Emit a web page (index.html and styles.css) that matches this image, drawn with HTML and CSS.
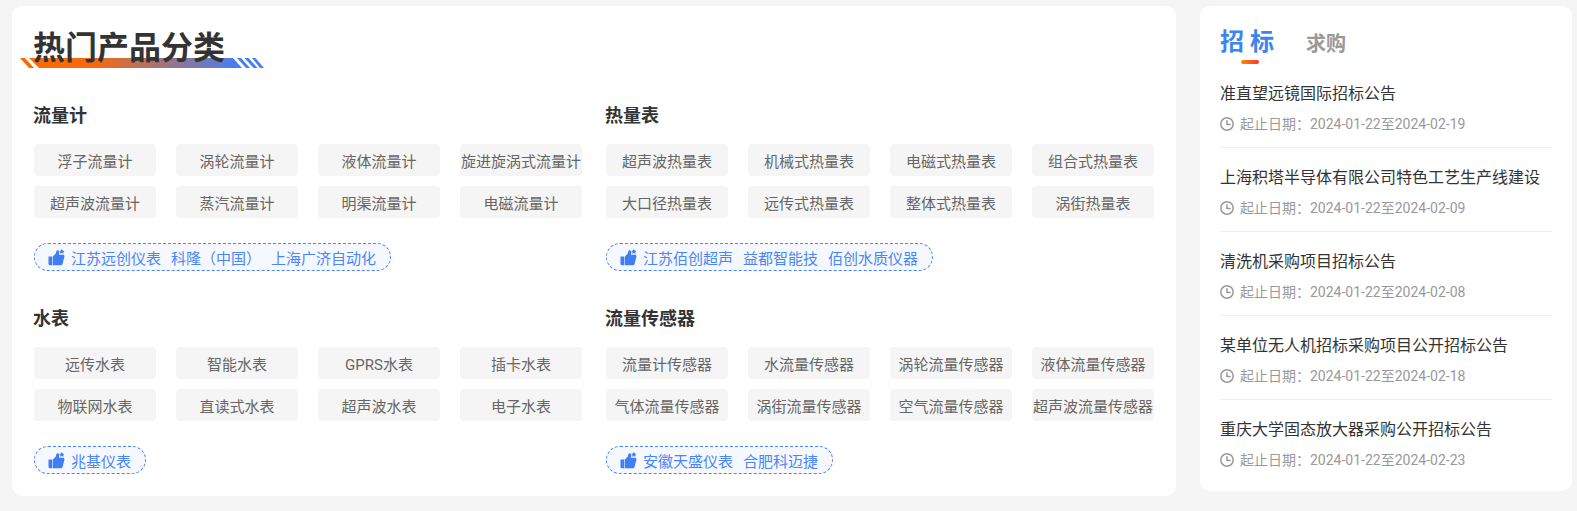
FILE: index.html
```html
<!DOCTYPE html>
<html lang="zh-CN">
<head>
<meta charset="utf-8">
<title>热门产品分类</title>
<link rel="stylesheet" href="styles.css">
</head>
<body>
<svg class="defs" width="0" height="0" aria-hidden="true">
  <symbol id="thumb" viewBox="0 0 17 17">
    <path d="M0.5 7.500h3.800v8.700H1.600a1.100 1.100 0 0 1-1.100-1.100z"/>
    <path d="M4.900 7.400l2.900-3c.4-1.300.7-3 1.700-3.100 1.400-.1 1.900 1.100 1.800 2.400l-.4 2.100h4.200c1 0 1.500.9 1.300 1.900l-1.700 6.700c-.2.800-.8 1.800-1.700 1.800H4.900z"/>
    <path d="M13.800 0l.9 1.500 1.700.4-1.100 1.200.2 1.700-1.700-.7-1.600.7.200-1.700-1.100-1.200 1.600-.4z"/>
  </symbol>
  <symbol id="clock" viewBox="0 0 14 14">
    <circle cx="7" cy="7" r="6.200" fill="none" stroke="currentColor" stroke-width="1.500"/>
    <path d="M7 3.200V7.500H10.600" fill="none" stroke="currentColor" stroke-width="1.500"/>
  </symbol>
</svg>
<main class="page">
  <section class="card products">
    <header class="heading">
      <svg class="ribbon" width="244" height="10" viewBox="0 0 244 10" aria-hidden="true">
        <defs>
          <linearGradient id="rib" x1="0" x2="1" y1="0" y2="0">
            <stop offset="0" stop-color="#ff6a00"/>
            <stop offset=".3" stop-color="#f8690f"/>
            <stop offset="1" stop-color="#4080f8"/>
          </linearGradient>
        </defs>
        <path d="M0 0h5l9 10H9z" fill="#ff6a00"/>
        <path d="M9 0h204l9 10H19z" fill="url(#rib)"/>
        <path d="M217 0h4l9 10h-4z" fill="#4a80f0"/>
        <path d="M224.500 0h4l9 10h-4z" fill="#4a80f0"/>
        <path d="M232 0h3.500l8.500 10h-4z" fill="#4a80f0"/>
      </svg>
      <h1 class="heading-text">热门产品分类</h1>
    </header>
    <div class="grid">
      <article class="group">
        <h2>流量计</h2>
        <div class="tiles">
          <a>浮子流量计</a><a>涡轮流量计</a><a>液体流量计</a><a>旋进旋涡式流量计</a>
          <a>超声波流量计</a><a>蒸汽流量计</a><a>明渠流量计</a><a>电磁流量计</a>
        </div>
        <div class="pill"><svg class="thumb"><use href="#thumb"/></svg><span>江苏远创仪表</span><span>科隆（中国）</span><span>上海广济自动化</span></div>
      </article>
      <article class="group">
        <h2>热量表</h2>
        <div class="tiles">
          <a>超声波热量表</a><a>机械式热量表</a><a>电磁式热量表</a><a>组合式热量表</a>
          <a>大口径热量表</a><a>远传式热量表</a><a>整体式热量表</a><a>涡街热量表</a>
        </div>
        <div class="pill"><svg class="thumb"><use href="#thumb"/></svg><span>江苏佰创超声</span><span>益都智能技</span><span>佰创水质仪器</span></div>
      </article>
      <article class="group">
        <h2>水表</h2>
        <div class="tiles">
          <a>远传水表</a><a>智能水表</a><a>GPRS水表</a><a>插卡水表</a>
          <a>物联网水表</a><a>直读式水表</a><a>超声波水表</a><a>电子水表</a>
        </div>
        <div class="pill"><svg class="thumb"><use href="#thumb"/></svg><span>兆基仪表</span></div>
      </article>
      <article class="group">
        <h2>流量传感器</h2>
        <div class="tiles">
          <a>流量计传感器</a><a>水流量传感器</a><a>涡轮流量传感器</a><a>液体流量传感器</a>
          <a>气体流量传感器</a><a>涡街流量传感器</a><a>空气流量传感器</a><a>超声波流量传感器</a>
        </div>
        <div class="pill"><svg class="thumb"><use href="#thumb"/></svg><span>安徽天盛仪表</span><span>合肥科迈捷</span></div>
      </article>
    </div>
  </section>
  <aside class="card tenders">
    <nav class="tabs">
      <span class="tab active">招标</span>
      <span class="tab">求购</span>
    </nav>
    <ul class="list">
      <li><p class="name">准直望远镜国际招标公告</p><p class="meta"><svg class="clock"><use href="#clock"/></svg>起止日期：2024-01-22至2024-02-19</p></li>
      <li><p class="name">上海积塔半导体有限公司特色工艺生产线建设</p><p class="meta"><svg class="clock"><use href="#clock"/></svg>起止日期：2024-01-22至2024-02-09</p></li>
      <li><p class="name">清洗机采购项目招标公告</p><p class="meta"><svg class="clock"><use href="#clock"/></svg>起止日期：2024-01-22至2024-02-08</p></li>
      <li><p class="name">某单位无人机招标采购项目公开招标公告</p><p class="meta"><svg class="clock"><use href="#clock"/></svg>起止日期：2024-01-22至2024-02-18</p></li>
      <li><p class="name">重庆大学固态放大器采购公开招标公告</p><p class="meta"><svg class="clock"><use href="#clock"/></svg>起止日期：2024-01-22至2024-02-23</p></li>
    </ul>
  </aside>
</main>
</body>
</html>
```

FILE: styles.css
```css
* { box-sizing: border-box; }
html, body { margin: 0; padding: 0; }
body {
  background: #f5f5f5;
  font-family: Roboto, "Noto Sans CJK SC", sans-serif;
  color: #333;
  height: 511px;
  overflow: hidden;
}
.defs { position: absolute; }
.page {
  display: flex;
  align-items: flex-start;
  gap: 24px;
  padding: 6px 5px 0 12px;
}
.card { background: #fff; border-radius: 10px; }
.products { width: 1164px; height: 490px; padding: 18px 22px 0; }
.heading { position: relative; height: 50px; }
.ribbon { position: absolute; left: -14px; top: 32px; }
.heading-text {
  position: relative;
  margin: 2px 0 0 -1px;
  font-size: 32px;
  line-height: 44px;
  font-weight: 700;
  color: #333;
}
.grid {
  display: grid;
  grid-template-columns: 548px 548px;
  column-gap: 24px;
  row-gap: 0;
  margin-top: 27px;
}
.group { height: 203px; }
.group h2 {
  margin: 0 0 15px -1px;
  font-size: 18px;
  line-height: 26px;
  font-weight: 700;
  color: #333;
}
.tiles {
  display: grid;
  grid-template-columns: repeat(4, 122px);
  grid-auto-rows: 32px;
  gap: 10px 20px;
}
.tiles a {
  display: flex;
  align-items: center;
  justify-content: center;
  background: #f5f5f5;
  border-radius: 4px;
  font-size: 15px;
  color: #666;
  white-space: nowrap;
}
.pill {
  display: inline-flex;
  align-items: center;
  gap: 10px;
  height: 28px;
  margin-top: 25px;
  padding: 0 14px 0 13px;
  border: 1px dashed #4a86f7;
  border-radius: 14px;
  background: #f5f8ff;
  font-size: 15px;
  color: #4a86f7;
}
.thumb { width: 17px; height: 17px; fill: #3f7ff5; margin-right: -4px; }
.tenders { width: 372px; height: 485px; padding: 18px 20px 0; }
.tabs { display: flex; align-items: flex-end; gap: 32px; height: 36px; }
.tab { font-size: 20px; font-weight: 700; color: #999; line-height: 32px; }
.tab.active {
  position: relative;
  font-size: 24px;
  letter-spacing: 6px;
  margin-right: -6px;
  color: #3c85f0;
  line-height: 36px;
}
.tab.active::after {
  content: "";
  position: absolute;
  left: 21px;
  bottom: -4px;
  width: 18px;
  height: 4px;
  border-radius: 2px;
  background: linear-gradient(90deg, #ff8a00, #f8382e);
}
.list { list-style: none; margin: 4px 0 0; padding: 0; }
.list li {
  height: 84px;
  padding-top: 18px;
  border-bottom: 1px solid #eee;
}
.list li:last-child { border-bottom: 0; }
.name {
  margin: 0;
  font-size: 16px;
  line-height: 24px;
  color: #333;
  white-space: nowrap;
}
.meta {
  display: flex;
  align-items: center;
  gap: 6px;
  margin: 7px 0 0;
  font-size: 14px;
  line-height: 22px;
  color: #999;
}
.clock { width: 14px; height: 14px; flex: none; color: #999; }
```
